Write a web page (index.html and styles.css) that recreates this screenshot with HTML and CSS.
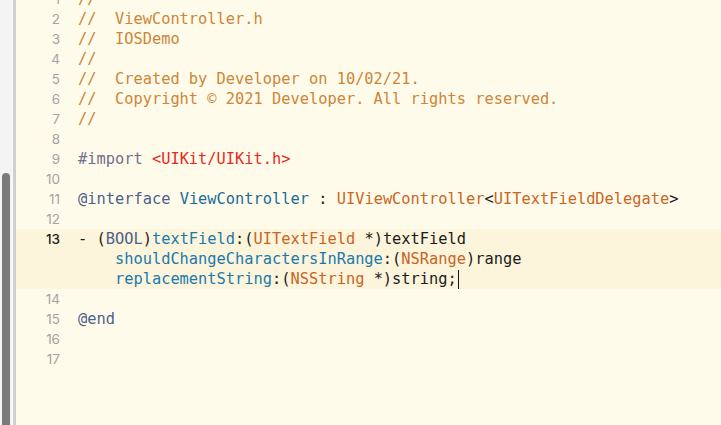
FILE: index.html
```html
<!DOCTYPE html>
<html>
<head>
<meta charset="utf-8">
<link rel="stylesheet" href="styles.css">
</head>
<body>
<div class="window">
  <div class="track"><div class="thumb"></div></div>
  <div class="divider"></div>
  <div class="editor">
    <div class="lines">
      <div class="row"><span class="num">1</span><span class="code c-com">//</span></div>
      <div class="row"><span class="num">2</span><span class="code c-com">//  ViewController.h</span></div>
      <div class="row"><span class="num">3</span><span class="code c-com">//  IOSDemo</span></div>
      <div class="row"><span class="num">4</span><span class="code c-com">//</span></div>
      <div class="row"><span class="num">5</span><span class="code c-com">//  Created by Developer on 10/02/21.</span></div>
      <div class="row"><span class="num">6</span><span class="code c-com">//  Copyright © 2021 Developer. All rights reserved.</span></div>
      <div class="row"><span class="num">7</span><span class="code c-com">//</span></div>
      <div class="row"><span class="num">8</span><span class="code"></span></div>
      <div class="row"><span class="num">9</span><span class="code"><span class="c-pre">#import</span> <span class="c-str">&lt;UIKit/UIKit.h&gt;</span></span></div>
      <div class="row"><span class="num">10</span><span class="code"></span></div>
      <div class="row"><span class="num">11</span><span class="code"><span class="c-kw">@interface</span> <span class="c-decl">ViewController</span> : <span class="c-type">UIViewController</span>&lt;<span class="c-type">UITextFieldDelegate</span>&gt;</span></div>
      <div class="row"><span class="num">12</span><span class="code"></span></div>
      <div class="current">
        <div class="row"><span class="num cur">13</span><span class="code">- (<span class="c-kw">BOOL</span>)<span class="c-fn">textField</span>:(<span class="c-type">UITextField</span> *)textField</span></div>
        <div class="row"><span class="num"></span><span class="code">    <span class="c-fn">shouldChangeCharactersInRange</span>:(<span class="c-type">NSRange</span>)range</span></div>
        <div class="row"><span class="num"></span><span class="code">    <span class="c-fn">replacementString</span>:(<span class="c-type">NSString</span> *)string;<span class="caret"></span></span></div>
      </div>
      <div class="row"><span class="num">14</span><span class="code"></span></div>
      <div class="row"><span class="num">15</span><span class="code"><span class="c-kw">@end</span></span></div>
      <div class="row"><span class="num">16</span><span class="code"></span></div>
      <div class="row"><span class="num">17</span><span class="code"></span></div>
    </div>
  </div>
</div>
</body>
</html>
```
FILE: styles.css
```css
html, body {
  margin: 0;
  padding: 0;
  background: #fffbeb;
}
.window {
  display: flex;
  width: 721px;
  height: 425px;
  overflow: hidden;
}
.track {
  width: 12px;
  flex: 0 0 12px;
  background: #f4f4f4;
  padding-top: 173px;
  box-sizing: border-box;
  display: flex;
  justify-content: center;
}
.thumb {
  width: 8px;
  height: 300px;
  background: #7b7b7b;
  border-radius: 4px;
}
.divider {
  flex: 0 0 4px;
  box-sizing: border-box;
  border-left: 1px solid #fafafa;
  background: #cfcfcf;
}
.editor {
  flex: 1;
  background: #fffbeb;
  overflow: hidden;
}
.lines {
  margin-top: -11px;
}
.row {
  display: flex;
  height: 20px;
  align-items: center;
}
.num {
  flex: 0 0 44px;
  text-align: right;
  font-family: Inter, "Noto Sans", sans-serif;
  font-size: 13.5px;
  color: #a3a3a3;
  line-height: 20px;
}
.num.cur {
  color: #1a1a1a;
  font-weight: 500;
}
.code {
  display: block;
  padding-left: 18px;
  font-family: "DejaVu Sans Mono", monospace;
  font-size: 15.35px;
  white-space: pre;
  color: #1b1b1b;
  line-height: 20px;
}
.current {
  background: #fdf4dc;
}
.caret {
  display: inline-block;
  width: 1px;
  height: 19px;
  background: #111;
  margin-left: 1px;
  vertical-align: -5px;
}
.c-com { color: #cd8537; }
.c-pre { color: #6f6f8e; }
.c-str { color: #e6291b; }
.c-kw { color: #4d5f8c; }
.c-decl { color: #1a6c97; }
.c-type { color: #c8651f; }
.c-fn { color: #1a7aab; }
```
